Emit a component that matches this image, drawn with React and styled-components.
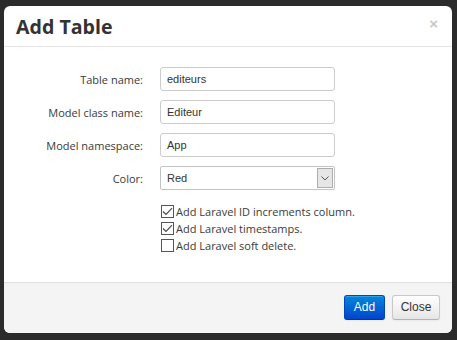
import React from "react";
import styled, { createGlobalStyle } from "styled-components";

const Global = createGlobalStyle`
  html, body { margin: 0; padding: 0; background: #2b2b2b; }
  body { width: 457px; height: 340px; overflow: hidden; }
`;

const Page = styled.div`
  padding: 6px 5px 7px 4px;
  box-sizing: border-box;
  width: 457px;
  height: 340px;
`;

const Modal = styled.div`
  background: #fff;
  border-radius: 6px;
  height: 327px;
  width: 448px;
  display: flex;
  flex-direction: column;
  overflow: hidden;
  font-family: "Open Sans", sans-serif;
  color: #333;
`;

const Header = styled.div`
  height: 40px;
  border-bottom: 1px solid #e5e5e5;
  display: flex;
  align-items: center;
  justify-content: space-between;
  padding: 0 14px 0 12px;
`;

const Title = styled.h3`
  margin: 0;
  font-size: 19.6px;
  font-weight: 700;
  color: #333;
  line-height: 28px;
  padding-top: 2px;
`;

const CloseX = styled.span`
  font-family: "Liberation Sans", Arial, sans-serif;
  font-size: 15px;
  font-weight: 700;
  color: #c8c8c8;
  line-height: 1;
  margin-top: -6px;
`;

const Body = styled.div`
  flex: 1;
  padding-top: 20px;
`;

const Form = styled.div`
  display: grid;
  grid-template-columns: 139px 175px;
  column-gap: 17px;
  row-gap: 9px;
  align-items: center;
`;

const Label = styled.label`
  text-align: right;
  font-size: 11px;
  color: #3a3a3a;
`;

const Input = styled.div`
  height: 24px;
  box-sizing: border-box;
  border: 1px solid #ccc;
  border-radius: 3px;
  padding-left: 6px;
  display: flex;
  align-items: center;
  font-family: "Liberation Sans", Arial, sans-serif;
  font-size: 11px;
  color: #333;
`;

const Select = styled(Input)`
  padding-right: 1px;
  justify-content: space-between;
  border-radius: 2px;
  border-color: #c3c3c3;
`;

const SelectButton = styled.span`
  width: 16px;
  height: 20px;
  box-sizing: border-box;
  background: #e6e6e6;
  border: 1px solid #adadad;
  display: flex;
  align-items: center;
  justify-content: center;
`;

const Checks = styled.div`
  grid-column: 2;
  margin-top: 6px;
  display: flex;
  flex-direction: column;
  gap: 4px;
  padding-left: 1px;
`;

const CheckRow = styled.div`
  display: flex;
  align-items: center;
  gap: 2px;
  font-size: 11px;
  color: #3a3a3a;
  height: 13px;
  white-space: nowrap;
`;

const Box = styled.span`
  width: 13px;
  height: 13px;
  box-sizing: border-box;
  border: 1px solid #555;
  background: #fff;
  display: flex;
  align-items: center;
  justify-content: center;
`;

const Footer = styled.div`
  height: 48px;
  border-top: 1px solid #e0e0e0;
  background: #f4f4f4;
  display: flex;
  align-items: center;
  justify-content: flex-end;
  gap: 7px;
  padding: 0 12px 2px 0;
`;

const Button = styled.button`
  height: 25px;
  box-sizing: border-box;
  border-radius: 3px;
  font-family: "Liberation Sans", Arial, sans-serif;
  font-size: 12px;
  padding: 0;
  width: ${(p) => (p.$primary ? "41px" : "48px")};
  color: ${(p) => (p.$primary ? "#fff" : "#333")};
  border: 1px solid ${(p) => (p.$primary ? "#0047b3" : "#c8c8c8")};
  border-bottom-color: ${(p) => (p.$primary ? "#003a99" : "#b3b3b3")};
  background: ${(p) =>
    p.$primary
      ? "linear-gradient(#0088dd, #0044cc)"
      : "linear-gradient(#ffffff, #e6e6e6)"};
  box-shadow: inset 0 1px 0 rgba(255,255,255,0.2), 0 1px 2px rgba(0,0,0,0.05);
`;

const Check = () => (
  <svg width="11" height="9" viewBox="0 0 11 9">
    <path d="M1 4.5 L4 7.5 L10 1.2" fill="none" stroke="#444" strokeWidth="1.1" />
  </svg>
);

const Chevron = () => (
  <svg width="8" height="5" viewBox="0 0 8 5">
    <path d="M0.5 0.5 L4 4 L7.5 0.5" fill="none" stroke="#555" strokeWidth="1" />
  </svg>
);

const fields = [
  ["Table name:", "editeurs"],
  ["Model class name:", "Editeur"],
  ["Model namespace:", "App"],
];

const checks = [
  ["Add Laravel ID increments column.", true],
  ["Add Laravel timestamps.", true],
  ["Add Laravel soft delete.", false],
];

export default function App() {
  return (
    <>
      <Global />
      <Page>
        <Modal>
          <Header>
            <Title>Add Table</Title>
            <CloseX>×</CloseX>
          </Header>
          <Body>
            <Form>
              {fields.map(([l, v]) => (
                <React.Fragment key={l}>
                  <Label>{l}</Label>
                  <Input>{v}</Input>
                </React.Fragment>
              ))}
              <Label>Color:</Label>
              <Select>
                <span>Red</span>
                <SelectButton>
                  <Chevron />
                </SelectButton>
              </Select>
              <Checks>
                {checks.map(([t, c]) => (
                  <CheckRow key={t}>
                    <Box>{c && <Check />}</Box>
                    <span>{t}</span>
                  </CheckRow>
                ))}
              </Checks>
            </Form>
          </Body>
          <Footer>
            <Button $primary>Add</Button>
            <Button>Close</Button>
          </Footer>
        </Modal>
      </Page>
    </>
  );
}
